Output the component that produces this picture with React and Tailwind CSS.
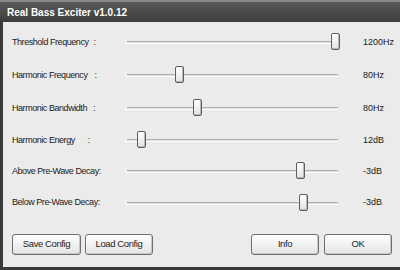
import React from 'react';

const sliders = [
  { label: 'Threshold Frequency', colon: 'ml-[5px]', value: '1200Hz', pos: 206, h: 'h-[33px]' },
  { label: 'Harmonic Frequency', colon: 'ml-[7px]', value: '80Hz', pos: 50, h: 'h-[33px]' },
  { label: 'Harmonic Bandwidth', colon: 'ml-[6px]', value: '80Hz', pos: 68, h: 'h-[33px]' },
  { label: 'Harmonic Energy', colon: 'ml-[13px]', value: '12dB', pos: 12, h: 'h-[31px]' },
  { label: 'Above Pre-Wave Decay', colon: 'ml-0', value: '-3dB', pos: 171, h: 'h-[31px]' },
  { label: 'Below Pre-Wave Decay', colon: 'ml-0', value: '-3dB', pos: 174, h: 'h-[32px]' },
];

function Slider({ pos }) {
  return (
    <div className="relative w-[213px] h-[3px] flex">
      <div className="w-[2px] h-[3px] bg-[#f4f4f4]" />
      <div className="flex-1 h-[3px] border-t border-[#b0b0b0] bg-[#dedede] border-b border-b-white" />
      <div
        className="absolute top-[-8px] w-[9px] h-[17px] rounded-[2px] border border-[#5f5f5f] bg-gradient-to-b from-white to-[#e2e2e2] shadow-[inset_-1px_-1px_0_#b8b8b8]"
        style={{ left: pos }}
      />
    </div>
  );
}

function Button({ children, w }) {
  return (
    <button className={`${w} h-[21px] rounded-[3px] border border-[#6e6e6e] bg-gradient-to-b from-white to-[#e4e4e4] text-[9.5px] tracking-[-0.4px] text-[#222] shadow-[inset_-1px_-1px_0_#c8c8c8]`}>
      {children}
    </button>
  );
}

export default function App() {
  return (
    <div className="w-[400px] h-[270px] flex flex-col bg-[#ebebeb] font-['Liberation_Sans',Arial,sans-serif] text-[#1a1a1a]">
      {/* title bar */}
      <div className="h-[22px] shrink-0 border-t-2 border-[#8a8a8a] bg-gradient-to-b from-[#5a5a5a] to-[#3c3c3c] flex items-center pl-[7px]">
        <span className="text-white font-bold text-[10px]">Real Bass Exciter v1.0.12</span>
      </div>

      <div className="flex-1 flex flex-col border-l-[3px] border-b-[3px] border-[#3a3a3a] pl-[9px] pt-[4px]">
        {sliders.map((s, i) => (
          <div key={i} className={`${s.h} flex items-center`}>
            <div className="w-[113px] flex text-[9px] tracking-[-0.45px]">
              <span>{s.label}</span>
              <span className={s.colon}>:</span>
            </div>
            <Slider pos={s.pos} />
            <div className="ml-[25px] text-[9px]">{s.value}</div>
          </div>
        ))}

        <div className="flex items-center mt-[15px]">
          <Button w="w-[69px]">Save Config</Button>
          <div className="w-[4px]" />
          <Button w="w-[68px]">Load Config</Button>
          <div className="w-[98px]" />
          <Button w="w-[68px]">Info</Button>
          <div className="w-[5px]" />
          <Button w="w-[68px]">OK</Button>
        </div>
      </div>
    </div>
  );
}
